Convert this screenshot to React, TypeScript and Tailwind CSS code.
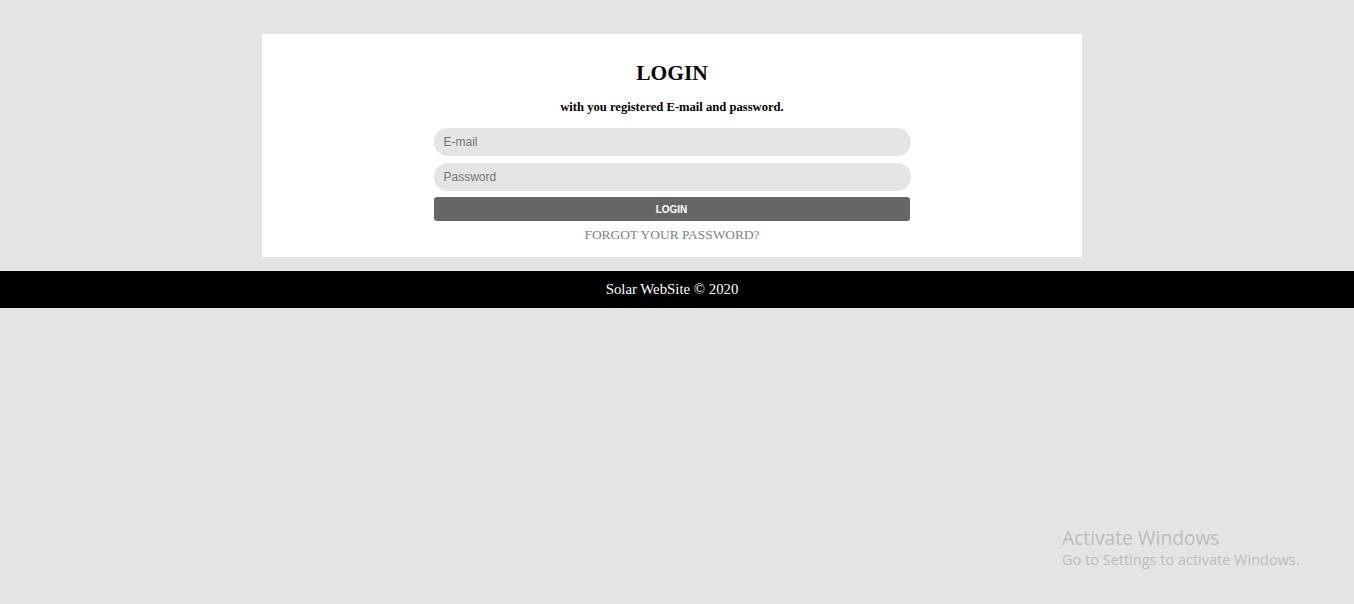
import React from 'react';

const serif = "font-['Liberation_Serif','Times_New_Roman',serif]";
const sans = "font-['Liberation_Sans',Arial,sans-serif]";

const LoginPage = () => {
  return (
    <div className="relative min-h-[604px] w-full bg-[#e4e4e4]">
      <div className="pr-[10px] pt-[34px]">
        <div className={`mx-auto flex w-[820px] flex-col items-center bg-white pb-[14px] pt-[26px] ${serif}`}>
          <h1 className="text-[21.5px] font-bold leading-[26px] text-black">LOGIN</h1>
          <p className="mt-[13px] text-[12.6px] font-bold leading-[16px] text-black">
            with you registered E-mail and password.
          </p>
          <form className="mt-[13px] flex w-[477px] flex-col" onSubmit={(e) => e.preventDefault()}>
            <input
              type="email"
              placeholder="E-mail"
              className={`h-[28px] w-full rounded-[14px] bg-[#e4e4e4] px-[10px] text-[12px] text-black outline-none placeholder:text-[#757575] ${sans}`}
            />
            <input
              type="password"
              placeholder="Password"
              className={`mt-[7px] h-[28px] w-full rounded-[14px] bg-[#e4e4e4] px-[10px] text-[12px] text-black outline-none placeholder:text-[#757575] ${sans}`}
            />
            <button
              type="submit"
              className={`mt-[6px] h-[24px] w-[476px] rounded-[3px] bg-[#666666] text-[10px] font-bold text-white ${sans}`}
            >
              LOGIN
            </button>
          </form>
          <a href="#" className="mt-[6px] text-[13.4px] leading-[16px] text-[#808080]">
            FORGOT YOUR PASSWORD?
          </a>
        </div>
      </div>
      <footer className={`mt-[14px] flex h-[37px] items-center justify-center bg-black pr-[10px] text-[14.8px] text-white ${serif}`}>
        Solar WebSite © 2020
      </footer>

      {/* windows watermark overlay */}
      <div className="pointer-events-none absolute left-[1062px] top-[526px] font-['Open_Sans','Noto_Sans',sans-serif] text-[#bdbdbd]">
        <div className="text-[19.2px] leading-[24px]">Activate Windows</div>
        <div className="text-[14.5px] leading-[20px]">Go to Settings to activate Windows.</div>
      </div>
    </div>
  );
};

export default function App() {
  return <LoginPage />;
}
